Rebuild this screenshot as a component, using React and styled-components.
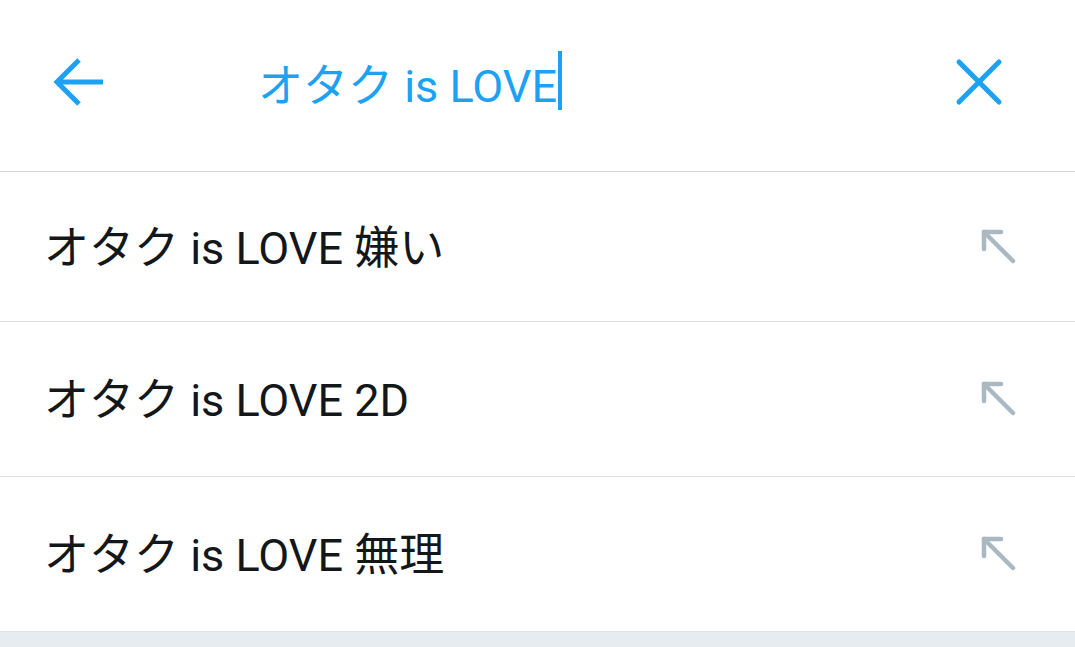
import React from "react";
import styled, { createGlobalStyle } from "styled-components";

const Global = createGlobalStyle`
  html, body { margin: 0; padding: 0; }
  body {
    background: #e6ecf0;
    font-family: Roboto, "Noto Sans CJK JP", sans-serif;
  }
`;

const Page = styled.div`
  width: 1075px;
  min-height: 647px;
  background: #e6ecf0;
`;

const Panel = styled.div`
  background: #ffffff;
  border-bottom: 1px solid #dde4e9;
`;

const Header = styled.div`
  height: 172px;
  display: flex;
  align-items: center;
  border-bottom: 1px solid #d3d9de;
  box-sizing: border-box;
  padding: 0 68px 7px 51px;
`;

const IconButton = styled.div`
  width: 56px;
  height: 56px;
  display: flex;
  align-items: center;
  justify-content: center;
  color: #1da1f2;
  flex: none;
`;

const Query = styled.div`
  flex: 1;
  margin-left: 151px;
  display: flex;
  align-items: center;
  font-size: 45px;
  color: #1da1f2;
  white-space: pre;
  height: 60px;
`;

const Caret = styled.span`
  display: inline-block;
  width: 4px;
  height: 59px;
  background: #1da1f2;
  margin-left: 1px;
  margin-top: -4px;
`;

const Row = styled.div`
  height: ${(p) => p.$h}px;
  display: flex;
  align-items: center;
  justify-content: space-between;
  padding: 0 58px 5px 44px;
  box-sizing: border-box;
  border-bottom: ${(p) => (p.$last ? "none" : "1px solid #d9dfe3")};
`;

const RowText = styled.span`
  font-size: 45px;
  color: #14171a;
  white-space: pre;
`;

const BackIcon = () => (
  <svg width="52" height="52" viewBox="0 0 52 52" fill="none" stroke="currentColor" strokeWidth="5" strokeLinecap="butt" strokeLinejoin="miter">
    <path d="M4 26 H50" />
    <path d="M26 4 L4 26 L26 48" />
  </svg>
);

const CloseIcon = () => (
  <svg width="48" height="48" viewBox="0 0 48 48" fill="none" stroke="currentColor" strokeWidth="5" strokeLinecap="round">
    <path d="M4 4 L44 44" />
    <path d="M44 4 L4 44" />
  </svg>
);

const FillIcon = styled.svg`
  color: #aab8c2;
  flex: none;
  margin-top: 5px;
`;

const NorthWest = () => (
  <FillIcon width="36" height="36" viewBox="0 0 36 36" fill="none" stroke="currentColor" strokeWidth="4.5" strokeLinecap="round" strokeLinejoin="round">
    <path d="M3 3 L32 32" />
    <path d="M3 20 V3 H20" />
  </FillIcon>
);

const suggestions = [
  { text: "オタク is LOVE 嫌い", h: 150 },
  { text: "オタク is LOVE 2D", h: 155 },
  { text: "オタク is LOVE 無理", h: 154 },
];

export default function App() {
  return (
    <Page>
      <Global />
      <Panel>
        <Header>
          <IconButton>
            <BackIcon />
          </IconButton>
          <Query>
            オタク is LOVE
            <Caret />
          </Query>
          <IconButton>
            <CloseIcon />
          </IconButton>
        </Header>
        {suggestions.map((s, i) => (
          <Row key={s.text} $h={s.h} $last={i === suggestions.length - 1}>
            <RowText>{s.text}</RowText>
            <NorthWest />
          </Row>
        ))}
      </Panel>
    </Page>
  );
}
